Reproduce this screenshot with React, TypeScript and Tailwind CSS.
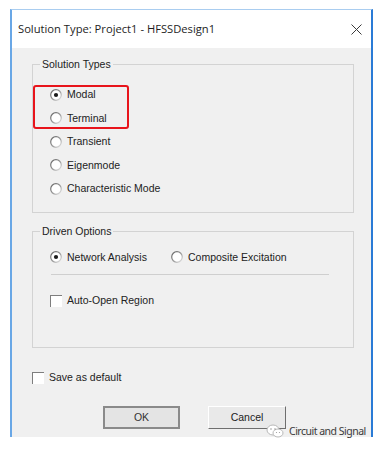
import React from "react";

const ui = { fontFamily: '"Liberation Sans", Arial, sans-serif' };

function Radio({ checked }: { checked?: boolean }) {
  return (
    <svg width="12" height="12" viewBox="0 0 12 12" className="shrink-0">
      <defs>
        <linearGradient id="rg" x1="0" y1="0" x2="1" y2="1">
          <stop offset="0" stopColor="#5f5f5f" />
          <stop offset="0.55" stopColor="#9a9a9a" />
          <stop offset="1" stopColor="#ececec" />
        </linearGradient>
      </defs>
      <circle cx="6" cy="6" r="5.3" fill="#ffffff" stroke="url(#rg)" strokeWidth="1.2" />
      {checked && <circle cx="6" cy="6" r="2.1" fill="#1b1b1b" />}
    </svg>
  );
}

function Check() {
  return (
    <span className="block w-[12px] h-[12px] shrink-0 bg-white border-t border-l border-[#7e7e7e] border-r-[#d6d6d6] border-b-[#d6d6d6]" />
  );
}

function RadioRow({ label, checked }: { label: string; checked?: boolean }) {
  return (
    <div className="h-[23.5px] flex items-center gap-[5px]">
      <Radio checked={checked} />
      <span className="text-[10.5px] leading-[13px] text-[#222]">{label}</span>
    </div>
  );
}

function Group({ title, className, children }: { title: string; className: string; children: React.ReactNode }) {
  return (
    <div className={"relative ml-[20px] w-[322px] border border-[#d3d3d3] " + className}>
      <span className="absolute -top-[7px] left-[7px] px-[2px] bg-[#f0f0f0] text-[10.5px] leading-[13px] text-[#222]">
        {title}
      </span>
      {children}
    </div>
  );
}

export default function App() {
  return (
    <div className="relative w-[384px] h-[449px] bg-white overflow-hidden" style={ui}>
      <div className="ml-[10px] mt-[9px] w-[363px] h-[428px] flex flex-col border-t border-t-[#a9cdf0] border-l-[2px] border-l-[#69a7e6] border-r-[2px] border-r-[#2a7bd6]">
        {/* Title bar */}
        <div className="h-[38px] bg-white flex items-center justify-between pl-[6px] pr-[9px] shrink-0">
          <span className="text-[11.2px] text-[#1e1e1e]" style={{ fontFamily: '"Open Sans", "Noto Sans", sans-serif' }}>
            Solution Type: Project1 - HFSSDesign1
          </span>
          <svg width="11" height="11" viewBox="0 0 11 11">
            <path d="M0.5 0.5 L10.5 10.5 M10.5 0.5 L0.5 10.5" stroke="#3a3a3a" strokeWidth="1" />
          </svg>
        </div>

        {/* Client area */}
        <div className="flex-1 bg-[#f0f0f0] flex flex-col">
          <Group title="Solution Types" className="mt-[16px] h-[149px]">
            <div className="pt-[18px] pl-[17px] flex flex-col">
              <RadioRow label="Modal" checked />
              <RadioRow label="Terminal" />
              <RadioRow label="Transient" />
              <RadioRow label="Eigenmode" />
              <RadioRow label="Characteristic Mode" />
            </div>
            <div className="absolute left-0 top-[20px] w-[96px] h-[44px] border-2 border-[#e8141b] rounded-[3px]" />
          </Group>

          <Group title="Driven Options" className="mt-[18px] h-[117px]">
            <div className="pt-[15px] pl-[17px] flex flex-col">
              <div className="flex items-center h-[20px]">
                <div className="w-[121px] flex items-center gap-[5px]">
                  <Radio checked />
                  <span className="text-[10.5px] leading-[13px] text-[#222]">Network Analysis</span>
                </div>
                <div className="flex items-center gap-[5px]">
                  <Radio />
                  <span className="text-[10.5px] leading-[13px] text-[#222]">Composite Excitation</span>
                </div>
              </div>
              <div className="mt-[7px] ml-[1px] w-[278px] h-px bg-[#cfcfcf]" />
              <div className="mt-[19px] flex items-center gap-[5px]">
                <Check />
                <span className="text-[10.5px] leading-[13px] text-[#222]">Auto-Open Region</span>
              </div>
            </div>
          </Group>

          <div className="mt-[23px] ml-[20px] flex items-center gap-[5px] h-[13px]">
            <Check />
            <span className="text-[10.5px] leading-[13px] text-[#222]">Save as default</span>
          </div>

          <div className="mt-[22px] ml-[91px] flex gap-[28px]">
            <button className="w-[77px] h-[23px] border-2 border-[#8a8a8a] bg-[#e4e4e4] text-[10.5px] text-[#333]">
              OK
            </button>
            <button className="w-[78px] h-[23px] border border-t-white border-l-white border-r-[#6e6e6e] border-b-[#6e6e6e] bg-[#e9e9e9] text-[10.5px] text-[#222]">
              Cancel
            </button>
          </div>
        </div>
      </div>

      {/* Watermark */}
      <div className="absolute left-[266px] top-[424px] flex items-center gap-[5px]">
        <svg width="18" height="14" viewBox="0 0 18 14">
          <ellipse cx="7" cy="6" rx="6" ry="5" fill="#fff" stroke="#b8b8b8" strokeWidth="1" />
          <ellipse cx="12" cy="9" rx="5" ry="4" fill="#fff" stroke="#b8b8b8" strokeWidth="1" />
          <circle cx="5" cy="5" r="0.8" fill="#9a9a9a" />
          <circle cx="9" cy="5" r="0.8" fill="#9a9a9a" />
          <circle cx="10.5" cy="8.5" r="0.6" fill="#9a9a9a" />
          <circle cx="13.5" cy="8.5" r="0.6" fill="#9a9a9a" />
        </svg>
        <span className="text-[10.5px] leading-[14px] text-[#3a3a3a] tracking-[-0.5px]" style={{ fontFamily: '"Noto Sans", sans-serif' }}>
          Circuit and Signal
        </span>
      </div>
    </div>
  );
}
